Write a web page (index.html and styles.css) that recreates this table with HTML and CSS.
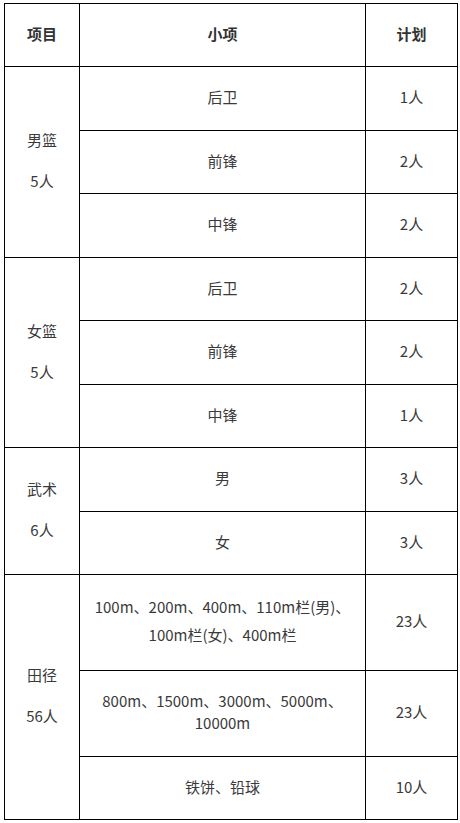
FILE: index.html
```html
<!DOCTYPE html>
<html lang="zh-CN">
<head>
<meta charset="utf-8">
<title>招生计划</title>
<link rel="stylesheet" href="styles.css">
</head>
<body>
<table class="plan">
  <colgroup>
    <col class="col-item">
    <col class="col-sub">
    <col class="col-num">
  </colgroup>
  <thead>
    <tr class="h63"><th>项目</th><th>小项</th><th>计划</th></tr>
  </thead>
  <tbody>
    <tr class="h64"><td rowspan="3" class="group"><p>男篮</p><p>5人</p></td><td>后卫</td><td>1人</td></tr>
    <tr class="h63"><td>前锋</td><td>2人</td></tr>
    <tr class="h64"><td>中锋</td><td>2人</td></tr>
    <tr class="h63"><td rowspan="3" class="group"><p>女篮</p><p>5人</p></td><td>后卫</td><td>2人</td></tr>
    <tr class="h64"><td>前锋</td><td>2人</td></tr>
    <tr class="h63"><td>中锋</td><td>1人</td></tr>
    <tr class="h64"><td rowspan="2" class="group"><p>武术</p><p>6人</p></td><td>男</td><td>3人</td></tr>
    <tr class="h63"><td>女</td><td>3人</td></tr>
    <tr class="h96"><td rowspan="3" class="group"><p>田径</p><p>56人</p></td><td class="multi tall">100m、200m、400m、110m栏(男)、100m栏(女)、400m栏</td><td>23人</td></tr>
    <tr class="h86"><td class="multi">800m、1500m、3000m、5000m、10000m</td><td>23人</td></tr>
    <tr class="h63"><td>铁饼、铅球</td><td>10人</td></tr>
  </tbody>
</table>
</body>
</html>
```

FILE: styles.css
```css
html, body {
  background: #ffffff;
}
body {
  margin: 3px 0 0 4px;
  font-family: "Noto Sans CJK SC", "Noto Sans", sans-serif;
  font-size: 15px;
  color: #3a3a3a;
}
.plan {
  border-collapse: collapse;
  table-layout: fixed;
  width: 453px;
}
.col-item { width: 75px; }
.col-sub { width: 286px; }
.col-num { width: 92px; }
.plan th,
.plan td {
  border: 1px solid #000;
  text-align: center;
  vertical-align: middle;
  padding: 0 10px 3px;
  line-height: 22px;
}
.plan th {
  font-weight: bold;
  color: #333;
}
.group p {
  margin: 0;
  line-height: 22px;
}
.group p + p {
  margin-top: 19px;
}
.multi.tall {
  line-height: 28px;
}
.h63 { height: 63px; }
.h64 { height: 64px; }
.h86 { height: 86px; }
.h96 { height: 96px; }
```
